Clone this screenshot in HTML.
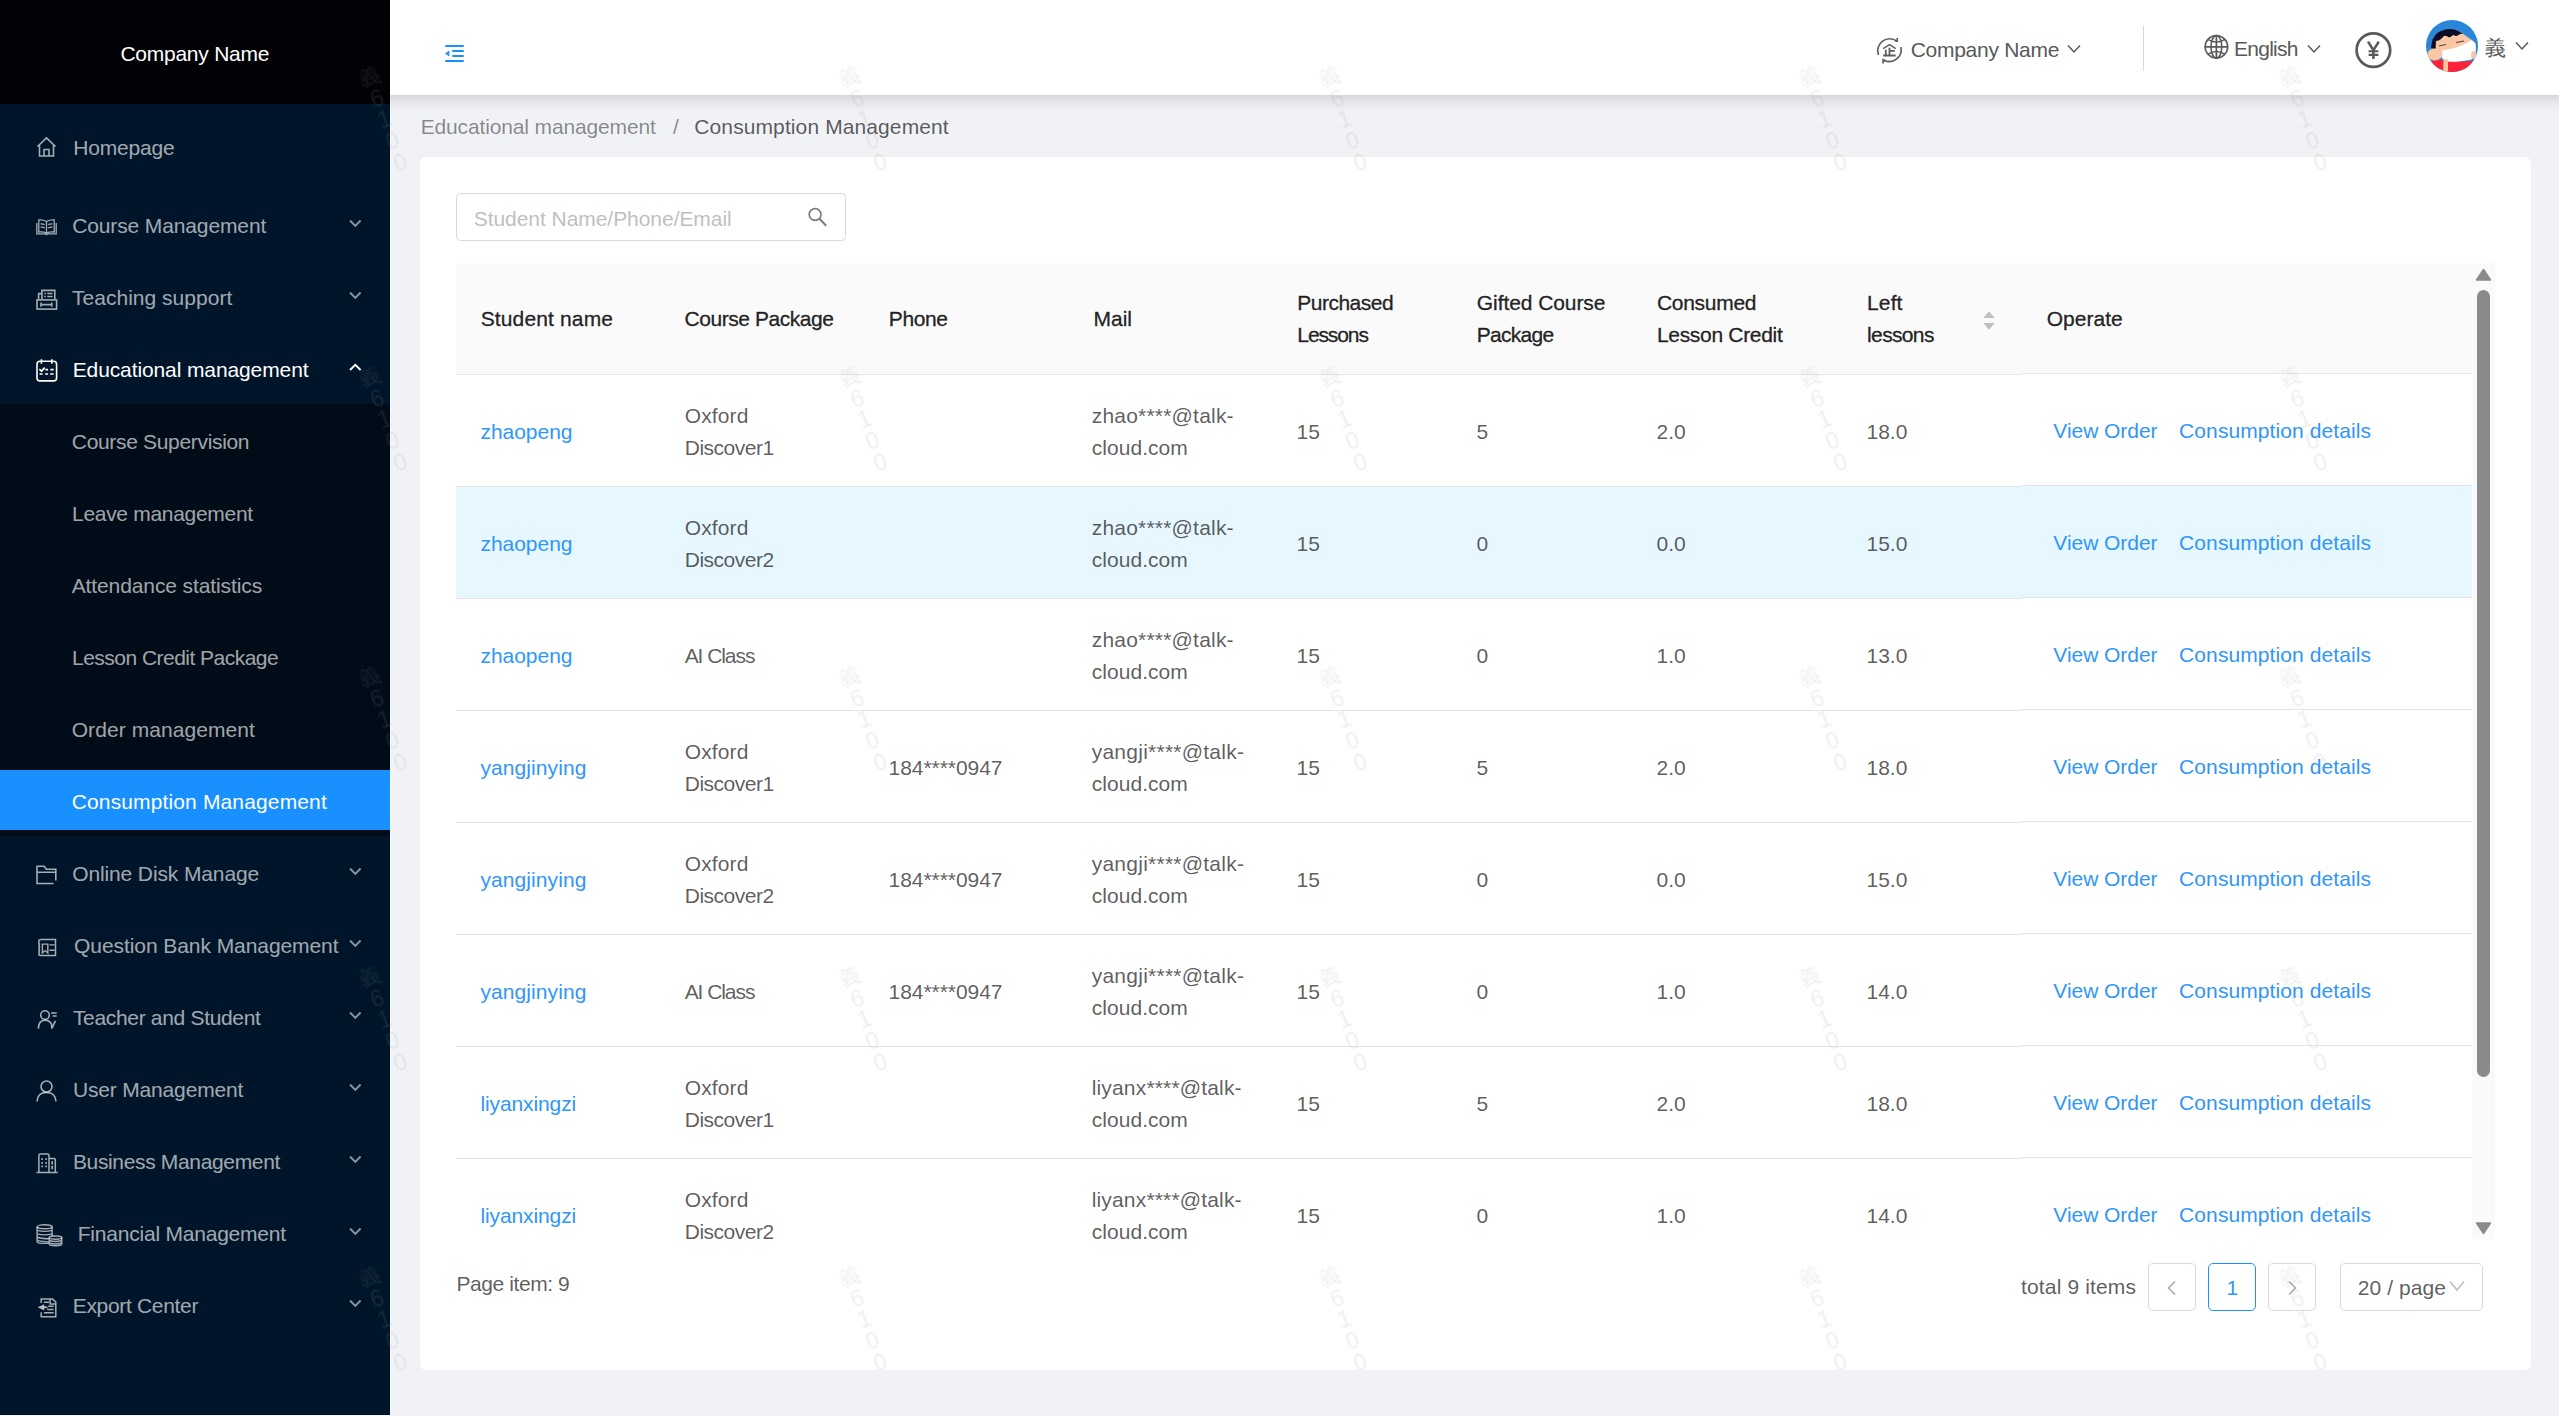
<!DOCTYPE html><html><head><meta charset="utf-8"><style>
*{margin:0;padding:0;box-sizing:border-box}
html,body{width:2559px;height:1416px;overflow:hidden;background:#f0f2f5;font-family:"Liberation Sans",sans-serif;font-size:21px;line-height:32px}
.t{position:absolute;white-space:nowrap}
.abs{position:absolute}
#side{position:absolute;left:0;top:0;width:390px;height:1415px;background:#001529}
#logo{position:absolute;left:0;top:0;width:390px;height:104px;background:#000206}
#sub{position:absolute;left:0;top:404px;width:390px;height:432px;background:#000c17}
#sel{position:absolute;left:0;top:770px;width:390px;height:60px;background:#1890ff}
.mi{color:rgba(255,255,255,.65)}
.ic{position:absolute}
#hdr{position:absolute;left:390px;top:0;width:2169px;height:95px;background:#fff;}
#hsh{position:absolute;left:390px;top:95px;width:2169px;height:18px;background:linear-gradient(rgba(0,0,0,.11),rgba(0,0,0,.04) 45%,rgba(0,0,0,0))}
#card{position:absolute;left:420px;top:157px;width:2111px;height:1213px;background:#fff;border-radius:6px}
.hd{color:rgba(0,0,0,.85);-webkit-text-stroke:0.35px rgba(0,0,0,.85)}
.bd{color:rgba(0,0,0,.65)}
.lk{color:#2f96fa}
.wm{position:absolute;font-size:23px;line-height:22.65px;color:rgba(150,150,150,.15);width:26px;text-align:center;transform:rotate(-20deg);transform-origin:50% 11px;filter:blur(0.45px)}
</style></head><body><div id="side"></div><div id="logo"></div><div id="sub"></div><div id="sel"></div>
<div style="position:absolute;left:390px;top:0;width:1px;height:1416px;background:#f7f8fa"></div>
<div style="position:absolute;left:0;top:1415px;width:391px;height:1px;background:#f7f8fa"></div>
<div class="t" style="left:120.40px;top:37.52px;letter-spacing:-0.245px;color:#fff;">Company Name</div>
<div class="t" style="left:73.30px;top:131.72px;letter-spacing:-0.186px;color:rgba(255,255,255,.65);">Homepage</div>
<svg class="ic" style="left:36px;top:136px" width="21" height="21" viewBox="0 0 21 21" fill="none" stroke="rgba(255,255,255,.65)" stroke-width="1.6"><path d="M1.5 10.5 L10.5 1.8 L19.5 10.5 M3.5 8.5 V20 H17.5 V8.5 M8 20 V13.5 H13 V20"/></svg>
<div class="t" style="left:72.20px;top:209.72px;letter-spacing:-0.125px;color:rgba(255,255,255,.65);">Course Management</div>
<svg class="ic" style="left:36px;top:218.5px" width="21" height="17" viewBox="0 0 21 17" fill="none" stroke="rgba(255,255,255,.65)" stroke-width="1.6"><g stroke-width="1.3"><path d="M0.8 4 V14.8 H9 Q10.5 14.8 10.5 16.3 Q10.5 14.8 12 14.8 H20.2 V4"/><path d="M2.8 1 Q7 0.6 10.5 2.5 Q14 0.6 18.2 1 V13 Q14 12.4 10.5 14.2 Q7 12.4 2.8 13 Z M10.5 2.5 V14"/><path d="M4.6 5 Q6.7 4.8 8.7 5.6 M4.6 8.2 Q6.7 8 8.7 8.8 M12.3 5.6 Q14.3 4.8 16.4 5 M12.3 8.8 Q14.3 8 16.4 8.2"/></g></svg>
<svg class="ic" style="left:349px;top:219px" width="13" height="9" viewBox="0 0 13 9" fill="none" stroke="rgba(255,255,255,.55)" stroke-width="1.9"><path d="M1 1.5 L6.3 6.8 L11.6 1.5"/></svg>
<div class="t" style="left:72.00px;top:281.72px;letter-spacing:0.020px;color:rgba(255,255,255,.65);">Teaching support</div>
<svg class="ic" style="left:36px;top:288.5px" width="22" height="22" viewBox="0 0 22 22" fill="none" stroke="rgba(255,255,255,.65)" stroke-width="1.6"><path d="M5.9 10 V1.4 H18.8 V10 M2.6 10 V4.6 H5.9"/><rect x="1" y="10.9" width="19.6" height="9.2"/><path d="M5 13.4 V17.8 M15.8 13.4 V17.8 M5 15.6 H15.8"/><path d="M8.3 4.4 H9.8 M11.3 4.4 H16.6 M8.3 7.4 H9.8 M11.3 7.4 H16.6" stroke-width="1.5"/></svg>
<svg class="ic" style="left:349px;top:291px" width="13" height="9" viewBox="0 0 13 9" fill="none" stroke="rgba(255,255,255,.55)" stroke-width="1.9"><path d="M1 1.5 L6.3 6.8 L11.6 1.5"/></svg>
<div class="t" style="left:72.70px;top:353.72px;letter-spacing:-0.110px;color:#fff;">Educational management</div>
<svg class="ic" style="left:36px;top:359px" width="22" height="24" viewBox="0 0 22 24" fill="none" stroke="#fff" stroke-width="1.6"><rect x="1" y="2.3" width="19.6" height="19.6" rx="3"/><path d="M5.4 0.2 V4.7 M15.8 0.2 V4.7"/><path d="M3.4 10.2 L5.5 12.2 L8.7 8.6 M9.3 10.6 H12.1 M14.4 10.6 H17.6 M3.6 15 H6.6 M9.1 15 H12.1 M14.2 15 H17.6" stroke-width="1.7"/></svg>
<svg class="ic" style="left:349px;top:363px" width="13" height="9" viewBox="0 0 13 9" fill="none" stroke="#fff" stroke-width="1.9"><path d="M1 7 L6.3 1.8 L11.6 7"/></svg>
<div class="t" style="left:71.80px;top:425.72px;letter-spacing:-0.324px;color:rgba(255,255,255,.65);">Course Supervision</div>
<div class="t" style="left:72.00px;top:497.72px;letter-spacing:-0.300px;color:rgba(255,255,255,.65);">Leave management</div>
<div class="t" style="left:71.70px;top:569.72px;letter-spacing:-0.105px;color:rgba(255,255,255,.65);">Attendance statistics</div>
<div class="t" style="left:72.00px;top:641.72px;letter-spacing:-0.525px;color:rgba(255,255,255,.65);">Lesson Credit Package</div>
<div class="t" style="left:71.70px;top:713.72px;letter-spacing:0.073px;color:rgba(255,255,255,.65);">Order management</div>
<div class="t" style="left:71.70px;top:785.72px;letter-spacing:0.138px;color:#fff;">Consumption Management</div>
<div class="t" style="left:72.20px;top:857.72px;letter-spacing:-0.124px;color:rgba(255,255,255,.65);">Online Disk Manage</div>
<svg class="ic" style="left:36px;top:864.5px" width="21" height="20" viewBox="0 0 21 20" fill="none" stroke="rgba(255,255,255,.65)" stroke-width="1.6"><path d="M17.5 18.5 H1 V1.3 H8.2 L10.3 4.3 H19.8 V15.5 M1 7.2 H19.8"/></svg>
<svg class="ic" style="left:349px;top:867px" width="13" height="9" viewBox="0 0 13 9" fill="none" stroke="rgba(255,255,255,.55)" stroke-width="1.9"><path d="M1 1.5 L6.3 6.8 L11.6 1.5"/></svg>
<div class="t" style="left:74.10px;top:929.72px;letter-spacing:-0.074px;color:rgba(255,255,255,.65);">Question Bank Management</div>
<svg class="ic" style="left:38px;top:937.5px" width="19" height="19" viewBox="0 0 19 19" fill="none" stroke="rgba(255,255,255,.65)" stroke-width="1.6"><path d="M3 1.6 H17.5 V17.5 H3 Q0.8 17.5 0.8 15.4 Q2.2 14.1 0.8 12.8 Q2.2 11.5 0.8 10.2 Q2.2 8.9 0.8 7.6 Q2.2 6.3 0.8 5 V3.8 Q0.8 1.6 3 1.6 Z" stroke-width="1.5"/><path d="M4.4 6.1 H9.8 V15 L7.1 12.6 L4.4 15 Z M11.4 6.9 H16.5 M11.4 12.2 H16.5" stroke-width="1.4"/></svg>
<svg class="ic" style="left:349px;top:939px" width="13" height="9" viewBox="0 0 13 9" fill="none" stroke="rgba(255,255,255,.55)" stroke-width="1.9"><path d="M1 1.5 L6.3 6.8 L11.6 1.5"/></svg>
<div class="t" style="left:72.90px;top:1001.72px;letter-spacing:-0.322px;color:rgba(255,255,255,.65);">Teacher and Student</div>
<svg class="ic" style="left:36.5px;top:1009.5px" width="20" height="20" viewBox="0 0 20 20" fill="none" stroke="rgba(255,255,255,.65)" stroke-width="1.6"><circle cx="8" cy="5.1" r="4.3"/><path d="M1.4 18.7 Q1.4 10.2 8.2 10.2 Q12.6 10.2 14.4 14.2 Q14.9 16 14.7 18.7 M18.4 10.9 L14.7 18.7"/><path d="M14.1 3 H19.7 M15.6 6 H19.7" stroke-width="1.5"/></svg>
<svg class="ic" style="left:349px;top:1011px" width="13" height="9" viewBox="0 0 13 9" fill="none" stroke="rgba(255,255,255,.55)" stroke-width="1.9"><path d="M1 1.5 L6.3 6.8 L11.6 1.5"/></svg>
<div class="t" style="left:72.90px;top:1073.72px;letter-spacing:-0.164px;color:rgba(255,255,255,.65);">User Management</div>
<svg class="ic" style="left:36px;top:1079.5px" width="21" height="23" viewBox="0 0 21 23" fill="none" stroke="rgba(255,255,255,.65)" stroke-width="1.6"><circle cx="10.5" cy="6.5" r="5.5"/><path d="M1 21.5 Q1.5 12.5 10.5 12.5 Q19.5 12.5 20 21.5"/></svg>
<svg class="ic" style="left:349px;top:1083px" width="13" height="9" viewBox="0 0 13 9" fill="none" stroke="rgba(255,255,255,.55)" stroke-width="1.9"><path d="M1 1.5 L6.3 6.8 L11.6 1.5"/></svg>
<div class="t" style="left:72.90px;top:1145.72px;letter-spacing:-0.344px;color:rgba(255,255,255,.65);">Business Management</div>
<svg class="ic" style="left:35.5px;top:1152px" width="22" height="22" viewBox="0 0 22 22" fill="none" stroke="rgba(255,255,255,.65)" stroke-width="1.6"><path d="M0.4 20.6 H21.8 M2.9 20.6 V3.3 Q2.9 2 4.2 2 H11.7 Q13 2 13 3.3 V20.6 M13 6.4 H18 Q19.3 6.4 19.3 7.7 V20.6" stroke-width="1.5"/><path d="M6.2 6.3 V8.1 M10.1 6.3 V8.1 M6.2 9.9 V11.7 M10.1 9.9 V11.7 M6.2 13.4 V15.2 M10.1 13.4 V15.2 M16.2 9.3 V12.4 M16.2 13.8 V17.2" stroke-width="1.7"/></svg>
<svg class="ic" style="left:349px;top:1155px" width="13" height="9" viewBox="0 0 13 9" fill="none" stroke="rgba(255,255,255,.55)" stroke-width="1.9"><path d="M1 1.5 L6.3 6.8 L11.6 1.5"/></svg>
<div class="t" style="left:77.70px;top:1217.72px;letter-spacing:-0.211px;color:rgba(255,255,255,.65);">Financial Management</div>
<svg class="ic" style="left:35.5px;top:1223.5px" width="27" height="23" viewBox="0 0 27 23" fill="none" stroke="rgba(255,255,255,.65)" stroke-width="1.6"><g stroke-width="1.4"><ellipse cx="8.6" cy="2.8" rx="7.5" ry="2"/><path d="M1.1 2.8 V17.4 Q1.1 19.3 8 19.4 H12.8 M16.1 2.8 V12.2 M1.1 6.3 Q8.6 8.5 16.1 6.3 M1.1 9.8 Q8.6 12 16.1 9.8 M1.1 13 Q5 14.6 12.8 14.8 M1.1 16.2 Q5 17.8 12.8 17.9"/><ellipse cx="19.5" cy="13.6" rx="6.3" ry="1.6"/><path d="M13.2 13.6 V20 Q13.2 21.8 19.5 21.8 Q25.8 21.8 25.8 20 V13.6 M13.2 16.5 Q19.5 18.5 25.8 16.5 M13.2 19 Q19.5 21 25.8 19"/></g></svg>
<svg class="ic" style="left:349px;top:1227px" width="13" height="9" viewBox="0 0 13 9" fill="none" stroke="rgba(255,255,255,.55)" stroke-width="1.9"><path d="M1 1.5 L6.3 6.8 L11.6 1.5"/></svg>
<div class="t" style="left:72.70px;top:1289.72px;letter-spacing:-0.317px;color:rgba(255,255,255,.65);">Export Center</div>
<svg class="ic" style="left:36.5px;top:1297.5px" width="20" height="20" viewBox="0 0 20 20" fill="none" stroke="rgba(255,255,255,.65)" stroke-width="1.6"><path d="M4.2 5.1 V0.9 H15.6 L18.8 4.1 V18.7 H4.2 V14.2 M13.1 0.9 V5.9 H18.8 M6.9 4.2 H12 M11.2 8.3 H16.7 M10.1 11.4 H16.7 M6.9 14.8 H16.7" stroke-width="1.5"/><path d="M0.6 9.3 L7.2 6.2 V12.4 Z" fill="rgba(255,255,255,.7)" stroke="none"/><path d="M6.5 9.3 H10.4" stroke-width="2"/></svg>
<svg class="ic" style="left:349px;top:1299px" width="13" height="9" viewBox="0 0 13 9" fill="none" stroke="rgba(255,255,255,.55)" stroke-width="1.9"><path d="M1 1.5 L6.3 6.8 L11.6 1.5"/></svg>
<div id="hdr"></div><div id="hsh"></div>
<svg class="ic" style="left:445px;top:44px" width="20" height="19" viewBox="0 0 20 19" fill="#1890ff"><rect x="0" y="1" width="19" height="2" rx="1"/><rect x="7" y="6" width="12" height="2" rx="1"/><rect x="7" y="11" width="12" height="2" rx="1"/><rect x="0" y="16" width="19" height="2" rx="1"/><path d="M0 9.5 L4.3 6.5 V12.5 Z"/></svg>
<svg class="ic" style="left:1872px;top:33px" width="35" height="35" viewBox="0 0 35 35" fill="none" stroke="#5c5e63" stroke-width="1.7"><path d="M25 8.2 A12 12 0 0 0 6.5 22 M28.9 14.1 A12 12 0 0 1 11.6 27.2"/><path d="M23.3 8.2 H25.2 V4.9 M13.2 27.6 L11.1 26.7 V30.4"/><path d="M11.1 15.6 L17.5 11.6 L23.7 15.6" stroke-width="1.4"/><path d="M11.1 22.5 H23.7 M13.8 16.8 V22.5 M17.5 14.8 V22.5 M17.5 17.8 H22.7" stroke-width="1.8"/></svg>
<div class="t" style="left:1910.70px;top:33.62px;letter-spacing:-0.273px;color:#595959;">Company Name</div>
<svg class="ic" style="left:2067px;top:44px" width="14" height="10" viewBox="0 0 14 10" fill="none" stroke="#595959" stroke-width="1.5"><path d="M1 1.5 L7 8 L13 1.5"/></svg>
<div class="abs" style="left:2143px;top:26px;width:1px;height:45px;background:#d9d9d9"></div>
<svg class="ic" style="left:2203px;top:34px" width="26" height="26" viewBox="0 0 26 26" fill="none" stroke="#595959" stroke-width="1.6"><circle cx="13.4" cy="12.8" r="11.3"/><ellipse cx="13.4" cy="12.8" rx="5.4" ry="11.3"/><path d="M13.4 1.5 V24.1 M2.1 12.8 H24.7" stroke-width="1.7"/><path d="M5.3 5.6 Q13.4 10.5 21.5 5.6 M5.3 20 Q13.4 15.1 21.5 20" stroke-width="1.5"/></svg>
<div class="t" style="left:2234.10px;top:32.62px;letter-spacing:-0.750px;color:#595959;">English</div>
<svg class="ic" style="left:2307px;top:43.5px" width="14" height="10" viewBox="0 0 14 10" fill="none" stroke="#595959" stroke-width="1.5"><path d="M1 1.5 L7 8 L13 1.5"/></svg>
<svg class="ic" style="left:2354px;top:31px" width="39" height="39" viewBox="0 0 39 39" fill="none" stroke="#595959" stroke-width="2.7"><circle cx="19.4" cy="19.1" r="16.8"/><path d="M14 10.6 L19.4 19.2 L24.8 10.6" stroke-width="2.5"/><path d="M19.4 19 V27.9" stroke-width="2.6"/><path d="M14.6 20.3 H24.4 M14.6 23.9 H24.4" stroke-width="2.1"/></svg>
<svg class="ic" style="left:2426px;top:20px" width="52" height="52" viewBox="0 0 52 52"><defs><clipPath id="av"><circle cx="26" cy="26" r="26"/></clipPath></defs><g clip-path="url(#av)"><rect width="52" height="52" fill="#2a86d6"/><path d="M4.5 29 Q6 17 12 13 Q18 9.5 23 9.2 Q31 9 36.5 13.5 L45.8 20 L49.6 23.5 L49.6 32 L45 40 L22 42.5 L16 38 L9 30 Z" fill="#f9c7a4"/><path d="M4.8 28.5 Q5.5 17 12 12.5 Q18 9 23 9 Q31 8.8 36.8 13.8 L34 14 Q31 16.5 29.5 16 Q27 14.5 26.5 15.5 Q24.5 17.8 22.8 17.2 Q20 15 18 16 Q15 19.5 12.7 20.5 L10 21 L9.6 29 Z" fill="#0c0c26"/><path d="M16.2 30.6 Q32 28.5 45.6 20.3 Q49.5 22 49.8 26 L49.6 32 Q47 38 45 39.5 Q34 41.8 22.5 42.2 Q17 40.5 16.2 37.7 Z" fill="#fff"/><path d="M7.5 40.8 Q14 39 20 41.5 Q30 42.5 44.3 41.3 L52 40 L52 52 L0 52 L0 42 Z" fill="#ff2238"/><path d="M17.5 39 L22 39.5 L22 52 L17 52 Z" fill="#f9c7a4"/><ellipse cx="8.7" cy="34.6" rx="7.5" ry="6" fill="#f9c7a4"/><ellipse cx="47.5" cy="35" rx="2.5" ry="4" fill="#f9c7a4"/><path d="M13 26 L20 24.5 M30 22.5 L38 21" stroke="#333" stroke-width="0.9" fill="none"/></g></svg>
<div class="t" style="left:2485.00px;top:32.22px;color:#595959;">義</div>
<svg class="ic" style="left:2515px;top:40.5px" width="14" height="10" viewBox="0 0 14 10" fill="none" stroke="#595959" stroke-width="1.5"><path d="M1 1.5 L7 8 L13 1.5"/></svg>
<div class="t" style="left:420.70px;top:111.12px;letter-spacing:-0.143px;color:rgba(0,0,0,.45);">Educational management</div>
<div class="t" style="left:673.00px;top:111.12px;color:rgba(0,0,0,.45);">/</div>
<div class="t" style="left:694.30px;top:111.12px;letter-spacing:0.105px;color:rgba(0,0,0,.65);">Consumption Management</div>
<div id="card"></div>
<div class="abs" style="left:456px;top:193px;width:390px;height:48px;border:1.5px solid #d9d9d9;border-radius:4.5px;background:#fff"></div>
<div class="t" style="left:473.70px;top:202.72px;letter-spacing:-0.048px;color:#bfbfbf;">Student Name/Phone/Email</div>
<svg class="ic" style="left:807px;top:207px" width="21" height="21" viewBox="0 0 21 21" fill="none" stroke="#7d7d7d" stroke-width="1.7"><circle cx="8.1" cy="7.5" r="5.9"/><path d="M12.4 11.8 L19.2 18.7" stroke-width="2"/></svg>
<div class="abs" style="left:456px;top:263px;width:2016px;height:111px;background:#fafafa;border-radius:6px 6px 0 0"></div>
<div class="abs" style="left:456px;top:374px;width:1566px;height:1px;background:#e6e6e6"></div>
<div class="abs" style="left:2022px;top:373px;width:450px;height:1px;background:#e6e6e6"></div><div class="abs" style="left:2022px;top:374px;width:450px;height:1px;background:#fff"></div>
<div class="abs" style="left:2472px;top:263px;width:23px;height:976px;background:#fafafa"></div>
<svg class="ic" style="left:2475px;top:268px" width="17" height="14" viewBox="0 0 17 14" fill="#8a8a8a"><path d="M8.5 1.5 L15.5 12 H1.5 Z" stroke="#8a8a8a" stroke-width="1.5" stroke-linejoin="round"/></svg>
<svg class="ic" style="left:2475px;top:1221px" width="17" height="14" viewBox="0 0 17 14" fill="#8a8a8a"><path d="M8.5 12.5 L15.5 2 H1.5 Z" stroke="#8a8a8a" stroke-width="1.5" stroke-linejoin="round"/></svg>
<div class="abs" style="left:2477px;top:290px;width:13px;height:787px;background:#8a8a8a;border-radius:6.5px"></div>
<div class="t hd" style="left:480.70px;top:303.42px;letter-spacing:0.136px;">Student name</div>
<div class="t hd" style="left:684.50px;top:303.42px;letter-spacing:-0.446px;">Course Package</div>
<div class="t hd" style="left:888.80px;top:303.42px;letter-spacing:-0.425px;">Phone</div>
<div class="t hd" style="left:1093.60px;top:303.42px;letter-spacing:-0.067px;">Mail</div>
<div class="t hd" style="left:1297.30px;top:287.32px;letter-spacing:-0.513px;">Purchased</div>
<div class="t hd" style="left:1297.30px;top:319.32px;letter-spacing:-1.100px;">Lessons</div>
<div class="t hd" style="left:1476.80px;top:287.32px;letter-spacing:-0.075px;">Gifted Course</div>
<div class="t hd" style="left:1476.80px;top:319.32px;letter-spacing:-0.733px;">Package</div>
<div class="t hd" style="left:1656.90px;top:287.32px;letter-spacing:-0.271px;">Consumed</div>
<div class="t hd" style="left:1656.90px;top:319.32px;letter-spacing:-0.308px;">Lesson Credit</div>
<div class="t hd" style="left:1867.10px;top:287.32px;letter-spacing:0.100px;">Left</div>
<div class="t hd" style="left:1867.10px;top:319.32px;letter-spacing:-0.650px;">lessons</div>
<div class="t hd" style="left:2046.70px;top:302.62px;letter-spacing:0.033px;">Operate</div>
<svg class="ic" style="left:1982px;top:310px" width="14" height="21" viewBox="0 0 14 21" fill="#bfbfbf"><path d="M7 1.5 L12.8 8 H1.2 Z M7 19.8 L12.8 13 H1.2 Z"/></svg>
<div class="abs" style="left:456px;top:374px;width:2016px;height:865px;overflow:hidden">
<div class="abs" style="left:0;top:112px;width:1566px;height:1px;background:#e4e4e4"></div>
<div class="abs" style="left:1566px;top:111px;width:450px;height:1px;background:#e4e4e4"></div>
<div class="t lk" style="left:24.50px;top:41.52px;letter-spacing:-0.043px;">zhaopeng</div>
<div class="t bd" style="left:228.70px;top:26.22px;letter-spacing:0.120px;">Oxford</div>
<div class="t bd" style="left:228.70px;top:57.92px;letter-spacing:-0.475px;">Discover1</div>
<div class="t bd" style="left:635.70px;top:26.22px;letter-spacing:0.208px;">zhao****@talk-</div>
<div class="t bd" style="left:635.70px;top:57.92px;letter-spacing:0.050px;">cloud.com</div>
<div class="t bd" style="left:840.50px;top:41.52px;">15</div>
<div class="t bd" style="left:1020.50px;top:41.52px;">5</div>
<div class="t bd" style="left:1200.50px;top:41.52px;">2.0</div>
<div class="t bd" style="left:1410.50px;top:41.52px;">18.0</div>
<div class="t lk" style="left:1597.30px;top:40.52px;letter-spacing:-0.044px;">View Order</div>
<div class="t lk" style="left:1723.10px;top:40.52px;letter-spacing:0.089px;">Consumption details</div>
<div class="abs" style="left:0;top:113px;width:1566px;height:111px;background:#e6f7ff"></div><div class="abs" style="left:1566px;top:112px;width:450px;height:111px;background:#e6f7ff"></div>
<div class="abs" style="left:0;top:224px;width:1566px;height:1px;background:#e4e4e4"></div>
<div class="abs" style="left:1566px;top:223px;width:450px;height:1px;background:#e4e4e4"></div>
<div class="t lk" style="left:24.50px;top:153.52px;letter-spacing:-0.043px;">zhaopeng</div>
<div class="t bd" style="left:228.70px;top:138.22px;letter-spacing:0.120px;">Oxford</div>
<div class="t bd" style="left:228.70px;top:169.92px;letter-spacing:-0.475px;">Discover2</div>
<div class="t bd" style="left:635.70px;top:138.22px;letter-spacing:0.208px;">zhao****@talk-</div>
<div class="t bd" style="left:635.70px;top:169.92px;letter-spacing:0.050px;">cloud.com</div>
<div class="t bd" style="left:840.50px;top:153.52px;">15</div>
<div class="t bd" style="left:1020.50px;top:153.52px;">0</div>
<div class="t bd" style="left:1200.50px;top:153.52px;">0.0</div>
<div class="t bd" style="left:1410.50px;top:153.52px;">15.0</div>
<div class="t lk" style="left:1597.30px;top:152.52px;letter-spacing:-0.044px;">View Order</div>
<div class="t lk" style="left:1723.10px;top:152.52px;letter-spacing:0.089px;">Consumption details</div>
<div class="abs" style="left:0;top:336px;width:1566px;height:1px;background:#e4e4e4"></div>
<div class="abs" style="left:1566px;top:335px;width:450px;height:1px;background:#e4e4e4"></div>
<div class="t lk" style="left:24.50px;top:265.52px;letter-spacing:-0.043px;">zhaopeng</div>
<div class="t bd" style="left:228.70px;top:265.52px;letter-spacing:-1.071px;">AI Class</div>
<div class="t bd" style="left:635.70px;top:250.22px;letter-spacing:0.208px;">zhao****@talk-</div>
<div class="t bd" style="left:635.70px;top:281.92px;letter-spacing:0.050px;">cloud.com</div>
<div class="t bd" style="left:840.50px;top:265.52px;">15</div>
<div class="t bd" style="left:1020.50px;top:265.52px;">0</div>
<div class="t bd" style="left:1200.50px;top:265.52px;">1.0</div>
<div class="t bd" style="left:1410.50px;top:265.52px;">13.0</div>
<div class="t lk" style="left:1597.30px;top:264.52px;letter-spacing:-0.044px;">View Order</div>
<div class="t lk" style="left:1723.10px;top:264.52px;letter-spacing:0.089px;">Consumption details</div>
<div class="abs" style="left:0;top:448px;width:1566px;height:1px;background:#e4e4e4"></div>
<div class="abs" style="left:1566px;top:447px;width:450px;height:1px;background:#e4e4e4"></div>
<div class="t lk" style="left:24.50px;top:377.52px;letter-spacing:0.080px;">yangjinying</div>
<div class="t bd" style="left:228.70px;top:362.22px;letter-spacing:0.120px;">Oxford</div>
<div class="t bd" style="left:228.70px;top:393.92px;letter-spacing:-0.475px;">Discover1</div>
<div class="t bd" style="left:432.60px;top:377.52px;letter-spacing:-0.050px;">184****0947</div>
<div class="t bd" style="left:635.70px;top:362.22px;letter-spacing:0.247px;">yangji****@talk-</div>
<div class="t bd" style="left:635.70px;top:393.92px;letter-spacing:0.050px;">cloud.com</div>
<div class="t bd" style="left:840.50px;top:377.52px;">15</div>
<div class="t bd" style="left:1020.50px;top:377.52px;">5</div>
<div class="t bd" style="left:1200.50px;top:377.52px;">2.0</div>
<div class="t bd" style="left:1410.50px;top:377.52px;">18.0</div>
<div class="t lk" style="left:1597.30px;top:376.52px;letter-spacing:-0.044px;">View Order</div>
<div class="t lk" style="left:1723.10px;top:376.52px;letter-spacing:0.089px;">Consumption details</div>
<div class="abs" style="left:0;top:560px;width:1566px;height:1px;background:#e4e4e4"></div>
<div class="abs" style="left:1566px;top:559px;width:450px;height:1px;background:#e4e4e4"></div>
<div class="t lk" style="left:24.50px;top:489.52px;letter-spacing:0.080px;">yangjinying</div>
<div class="t bd" style="left:228.70px;top:474.22px;letter-spacing:0.120px;">Oxford</div>
<div class="t bd" style="left:228.70px;top:505.92px;letter-spacing:-0.475px;">Discover2</div>
<div class="t bd" style="left:432.60px;top:489.52px;letter-spacing:-0.050px;">184****0947</div>
<div class="t bd" style="left:635.70px;top:474.22px;letter-spacing:0.247px;">yangji****@talk-</div>
<div class="t bd" style="left:635.70px;top:505.92px;letter-spacing:0.050px;">cloud.com</div>
<div class="t bd" style="left:840.50px;top:489.52px;">15</div>
<div class="t bd" style="left:1020.50px;top:489.52px;">0</div>
<div class="t bd" style="left:1200.50px;top:489.52px;">0.0</div>
<div class="t bd" style="left:1410.50px;top:489.52px;">15.0</div>
<div class="t lk" style="left:1597.30px;top:488.52px;letter-spacing:-0.044px;">View Order</div>
<div class="t lk" style="left:1723.10px;top:488.52px;letter-spacing:0.089px;">Consumption details</div>
<div class="abs" style="left:0;top:672px;width:1566px;height:1px;background:#e4e4e4"></div>
<div class="abs" style="left:1566px;top:671px;width:450px;height:1px;background:#e4e4e4"></div>
<div class="t lk" style="left:24.50px;top:601.52px;letter-spacing:0.080px;">yangjinying</div>
<div class="t bd" style="left:228.70px;top:601.52px;letter-spacing:-1.071px;">AI Class</div>
<div class="t bd" style="left:432.60px;top:601.52px;letter-spacing:-0.050px;">184****0947</div>
<div class="t bd" style="left:635.70px;top:586.22px;letter-spacing:0.247px;">yangji****@talk-</div>
<div class="t bd" style="left:635.70px;top:617.92px;letter-spacing:0.050px;">cloud.com</div>
<div class="t bd" style="left:840.50px;top:601.52px;">15</div>
<div class="t bd" style="left:1020.50px;top:601.52px;">0</div>
<div class="t bd" style="left:1200.50px;top:601.52px;">1.0</div>
<div class="t bd" style="left:1410.50px;top:601.52px;">14.0</div>
<div class="t lk" style="left:1597.30px;top:600.52px;letter-spacing:-0.044px;">View Order</div>
<div class="t lk" style="left:1723.10px;top:600.52px;letter-spacing:0.089px;">Consumption details</div>
<div class="abs" style="left:0;top:784px;width:1566px;height:1px;background:#e4e4e4"></div>
<div class="abs" style="left:1566px;top:783px;width:450px;height:1px;background:#e4e4e4"></div>
<div class="t lk" style="left:24.50px;top:713.52px;letter-spacing:-0.120px;">liyanxingzi</div>
<div class="t bd" style="left:228.70px;top:698.22px;letter-spacing:0.120px;">Oxford</div>
<div class="t bd" style="left:228.70px;top:729.92px;letter-spacing:-0.475px;">Discover1</div>
<div class="t bd" style="left:635.70px;top:698.22px;letter-spacing:0.167px;">liyanx****@talk-</div>
<div class="t bd" style="left:635.70px;top:729.92px;letter-spacing:0.050px;">cloud.com</div>
<div class="t bd" style="left:840.50px;top:713.52px;">15</div>
<div class="t bd" style="left:1020.50px;top:713.52px;">5</div>
<div class="t bd" style="left:1200.50px;top:713.52px;">2.0</div>
<div class="t bd" style="left:1410.50px;top:713.52px;">18.0</div>
<div class="t lk" style="left:1597.30px;top:712.52px;letter-spacing:-0.044px;">View Order</div>
<div class="t lk" style="left:1723.10px;top:712.52px;letter-spacing:0.089px;">Consumption details</div>
<div class="abs" style="left:0;top:896px;width:1566px;height:1px;background:#e4e4e4"></div>
<div class="abs" style="left:1566px;top:895px;width:450px;height:1px;background:#e4e4e4"></div>
<div class="t lk" style="left:24.50px;top:825.52px;letter-spacing:-0.120px;">liyanxingzi</div>
<div class="t bd" style="left:228.70px;top:810.22px;letter-spacing:0.120px;">Oxford</div>
<div class="t bd" style="left:228.70px;top:841.92px;letter-spacing:-0.475px;">Discover2</div>
<div class="t bd" style="left:635.70px;top:810.22px;letter-spacing:0.167px;">liyanx****@talk-</div>
<div class="t bd" style="left:635.70px;top:841.92px;letter-spacing:0.050px;">cloud.com</div>
<div class="t bd" style="left:840.50px;top:825.52px;">15</div>
<div class="t bd" style="left:1020.50px;top:825.52px;">0</div>
<div class="t bd" style="left:1200.50px;top:825.52px;">1.0</div>
<div class="t bd" style="left:1410.50px;top:825.52px;">14.0</div>
<div class="t lk" style="left:1597.30px;top:824.52px;letter-spacing:-0.044px;">View Order</div>
<div class="t lk" style="left:1723.10px;top:824.52px;letter-spacing:0.089px;">Consumption details</div>
</div>
<div class="t bd" style="left:456.40px;top:1268.42px;letter-spacing:-0.409px;">Page item: 9</div>
<div class="t bd" style="left:2021.00px;top:1270.72px;letter-spacing:0.150px;">total 9 items</div>
<div class="abs" style="left:2147.5px;top:1262.5px;width:48px;height:48px;border:1.5px solid #d9d9d9;border-radius:5px;background:#fff"></div>
<div class="abs" style="left:2207.5px;top:1262.5px;width:48px;height:48px;border:1.5px solid #1890ff;border-radius:5px;background:#fff"></div>
<div class="abs" style="left:2267.5px;top:1262.5px;width:48px;height:48px;border:1.5px solid #d9d9d9;border-radius:5px;background:#fff"></div>
<div class="abs" style="left:2339.5px;top:1262.5px;width:143px;height:48px;border:1.5px solid #d9d9d9;border-radius:5px;background:#fff"></div>
<svg class="ic" style="left:2165px;top:1280px" width="14" height="16" viewBox="0 0 14 16" fill="none" stroke="#a6a6a6" stroke-width="1.5"><path d="M10 1.5 L3.5 8 L10 14.5"/></svg>
<svg class="ic" style="left:2285px;top:1280px" width="14" height="16" viewBox="0 0 14 16" fill="none" stroke="#a6a6a6" stroke-width="1.5"><path d="M4 1.5 L10.5 8 L4 14.5"/></svg>
<div class="t lk" style="left:2226.50px;top:1271.72px;">1</div>
<div class="t bd" style="left:2357.70px;top:1271.72px;letter-spacing:0.087px;">20 / page</div>
<svg class="ic" style="left:2448.5px;top:1280px" width="16" height="12" viewBox="0 0 16 12" fill="none" stroke="#bfbfbf" stroke-width="1.6"><path d="M1 1.5 L8 10 L15 1.5"/></svg>
<div class="wm" style="left:355.7px;top:64.6px"><span style="font-size:21px">義</span><br>6<br>1<br>0<br>0</div><div class="wm" style="left:835.7px;top:64.6px"><span style="font-size:21px">義</span><br>6<br>1<br>0<br>0</div><div class="wm" style="left:1315.7px;top:64.6px"><span style="font-size:21px">義</span><br>6<br>1<br>0<br>0</div><div class="wm" style="left:1795.7px;top:64.6px"><span style="font-size:21px">義</span><br>6<br>1<br>0<br>0</div><div class="wm" style="left:2275.7px;top:64.6px"><span style="font-size:21px">義</span><br>6<br>1<br>0<br>0</div><div class="wm" style="left:355.7px;top:364.6px"><span style="font-size:21px">義</span><br>6<br>1<br>0<br>0</div><div class="wm" style="left:835.7px;top:364.6px"><span style="font-size:21px">義</span><br>6<br>1<br>0<br>0</div><div class="wm" style="left:1315.7px;top:364.6px"><span style="font-size:21px">義</span><br>6<br>1<br>0<br>0</div><div class="wm" style="left:1795.7px;top:364.6px"><span style="font-size:21px">義</span><br>6<br>1<br>0<br>0</div><div class="wm" style="left:2275.7px;top:364.6px"><span style="font-size:21px">義</span><br>6<br>1<br>0<br>0</div><div class="wm" style="left:355.7px;top:664.6px"><span style="font-size:21px">義</span><br>6<br>1<br>0<br>0</div><div class="wm" style="left:835.7px;top:664.6px"><span style="font-size:21px">義</span><br>6<br>1<br>0<br>0</div><div class="wm" style="left:1315.7px;top:664.6px"><span style="font-size:21px">義</span><br>6<br>1<br>0<br>0</div><div class="wm" style="left:1795.7px;top:664.6px"><span style="font-size:21px">義</span><br>6<br>1<br>0<br>0</div><div class="wm" style="left:2275.7px;top:664.6px"><span style="font-size:21px">義</span><br>6<br>1<br>0<br>0</div><div class="wm" style="left:355.7px;top:964.6px"><span style="font-size:21px">義</span><br>6<br>1<br>0<br>0</div><div class="wm" style="left:835.7px;top:964.6px"><span style="font-size:21px">義</span><br>6<br>1<br>0<br>0</div><div class="wm" style="left:1315.7px;top:964.6px"><span style="font-size:21px">義</span><br>6<br>1<br>0<br>0</div><div class="wm" style="left:1795.7px;top:964.6px"><span style="font-size:21px">義</span><br>6<br>1<br>0<br>0</div><div class="wm" style="left:2275.7px;top:964.6px"><span style="font-size:21px">義</span><br>6<br>1<br>0<br>0</div><div class="wm" style="left:355.7px;top:1264.6px"><span style="font-size:21px">義</span><br>6<br>1<br>0<br>0</div><div class="wm" style="left:835.7px;top:1264.6px"><span style="font-size:21px">義</span><br>6<br>1<br>0<br>0</div><div class="wm" style="left:1315.7px;top:1264.6px"><span style="font-size:21px">義</span><br>6<br>1<br>0<br>0</div><div class="wm" style="left:1795.7px;top:1264.6px"><span style="font-size:21px">義</span><br>6<br>1<br>0<br>0</div><div class="wm" style="left:2275.7px;top:1264.6px"><span style="font-size:21px">義</span><br>6<br>1<br>0<br>0</div></body></html>
